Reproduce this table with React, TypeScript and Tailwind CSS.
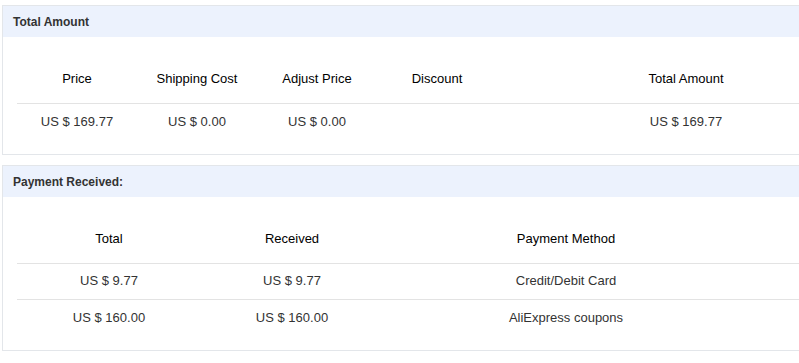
import React from "react";

const font = { fontFamily: '"Liberation Sans", Arial, sans-serif' };

function Panel({ title, children }: { title: string; children: React.ReactNode }) {
  return (
    <div className="border border-[#e3e6ea] bg-white">
      <div className="h-[31px] bg-[#ecf2fd] pl-[10px] flex items-center text-[12px] font-bold text-[#333]">
        {title}
      </div>
      <div className="pl-[14px] pt-[20px] pb-[14px]">{children}</div>
    </div>
  );
}

export default function App() {
  return (
    <div className="w-[799px] h-[363px] overflow-hidden bg-white" style={font}>
      <div className="w-[900px] pl-[2px] pt-[5px] flex flex-col gap-[10px]">
        <Panel title="Total Amount">
          <table className="table-fixed border-collapse text-[13px] text-center w-[858px]">
            <colgroup>
              <col className="w-[120px]" />
              <col className="w-[120px]" />
              <col className="w-[120px]" />
              <col className="w-[120px]" />
              <col />
            </colgroup>
            <thead>
              <tr className="h-[46px] text-black">
                <th className="font-normal pb-[2px]">Price</th>
                <th className="font-normal pb-[2px]">Shipping Cost</th>
                <th className="font-normal pb-[2px]">Adjust Price</th>
                <th className="font-normal pb-[2px]">Discount</th>
                <th className="font-normal pb-[2px]">Total Amount</th>
              </tr>
            </thead>
            <tbody>
              <tr className="h-[37px] border-t border-[#e3e3e3] text-[#333]">
                <td>US $ 169.77</td>
                <td>US $ 0.00</td>
                <td>US $ 0.00</td>
                <td></td>
                <td>US $ 169.77</td>
              </tr>
            </tbody>
          </table>
        </Panel>
        <Panel title="Payment Received:">
          <table className="table-fixed border-collapse text-[13px] text-center w-[858px]">
            <colgroup>
              <col className="w-[184px]" />
              <col className="w-[182px]" />
              <col className="w-[366px]" />
              <col />
            </colgroup>
            <thead>
              <tr className="h-[46px] text-black">
                <th className="font-normal pb-[2px]">Total</th>
                <th className="font-normal pb-[2px]">Received</th>
                <th className="font-normal pb-[2px]">Payment Method</th>
                <th className="font-normal"></th>
              </tr>
            </thead>
            <tbody className="text-[#333]">
              <tr className="h-[36px] border-t border-[#e3e3e3]">
                <td>US $ 9.77</td>
                <td>US $ 9.77</td>
                <td>Credit/Debit Card</td>
                <td></td>
              </tr>
              <tr className="h-[37px] border-t border-[#e3e3e3]">
                <td>US $ 160.00</td>
                <td>US $ 160.00</td>
                <td>AliExpress coupons</td>
                <td></td>
              </tr>
            </tbody>
          </table>
        </Panel>
      </div>
    </div>
  );
}
